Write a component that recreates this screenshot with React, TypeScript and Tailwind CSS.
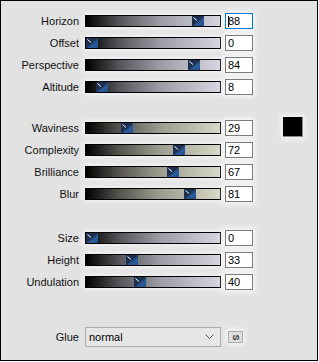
import React from 'react';

type Row = { label: string; value: number };

const gray = 'linear-gradient(to right, #000 0%, #55555a 25%, #9c9ca6 55%, #d6d6e0 100%)';
const beige = 'linear-gradient(to right, #000 0%, #55554f 25%, #9c9c8e 55%, #d8d8c8 100%)';

const Thumb: React.FC<{ value: number }> = ({ value }) => (
  <svg
    width="12"
    height="10"
    viewBox="0 0 12 10"
    className="absolute top-0"
    style={{ left: `${(value / 100) * 121}px` }}
  >
    <defs>
      <linearGradient id="tb" x1="0" y1="0" x2="1" y2="1">
        <stop offset="0" stopColor="#3a72bb" />
        <stop offset="1" stopColor="#24508c" />
      </linearGradient>
    </defs>
    <rect x="0" y="0" width="12" height="10" fill="url(#tb)" />
    <polygon points="0,0 12,0 0,10" fill="#1b2a44" />
    <polygon points="0,0 12,0 12,2 2,10 0,10" fill="#1f3356" opacity="0.6" />
    <line x1="1.5" y1="1.5" x2="5" y2="4.5" stroke="#ffffff" strokeWidth="1" />
  </svg>
);

const SliderRow: React.FC<{ row: Row; bg: string; focused?: boolean; extra?: React.ReactNode }> = ({ row, bg, focused, extra }) => (
  <div className="flex h-[22px] items-center">
    <div className="w-[78px] text-right text-[11px] leading-none text-[#111]">{row.label}</div>
    <div className="ml-[6px] h-[12px] w-[136px] border border-black shadow-[0_0_5px_2px_rgba(255,255,255,0.6)]" style={{ background: bg }}>
      <div className="relative h-[10px]">
        <Thumb value={row.value} />
      </div>
    </div>
    <div
      className={`ml-[4px] flex h-[16px] w-[28px] items-center bg-white pl-[2px] text-[11px] leading-none text-black shadow-[0_0_5px_2px_rgba(255,255,255,0.8)] border ${
        focused ? 'border-[#0078d7]' : 'border-[#7a7a7a]'
      }`}
    >
      {focused && <span className="mr-[-1px] h-[11px] w-px bg-black" />}
      {row.value}
    </div>
    {extra}
  </div>
);

export default function App() {
  const groupA: Row[] = [
    { label: 'Horizon', value: 88 },
    { label: 'Offset', value: 0 },
    { label: 'Perspective', value: 84 },
    { label: 'Altitude', value: 8 },
  ];
  const groupB: Row[] = [
    { label: 'Waviness', value: 29 },
    { label: 'Complexity', value: 72 },
    { label: 'Brilliance', value: 67 },
    { label: 'Blur', value: 81 },
  ];
  const groupC: Row[] = [
    { label: 'Size', value: 0 },
    { label: 'Height', value: 33 },
    { label: 'Undulation', value: 40 },
  ];

  return (
    <div className="h-[361px] w-[318px] border border-black bg-[#e2e2e2] font-['Liberation_Sans',Arial,sans-serif]">
      <div className="flex flex-col pt-[9px]">
        {groupA.map((r, i) => (
          <SliderRow key={r.label} row={r} bg={gray} focused={i === 0} />
        ))}
        <div className="h-[19px]" />
        {groupB.map((r, i) => (
          <SliderRow
            key={r.label}
            row={r}
            bg={beige}
            extra={
              i === 0 ? (
                <div className="ml-[30px] -mt-[2px] h-[20px] w-[20px] border-b border-r border-[#8a8a8a] bg-black shadow-[0_0_6px_2px_rgba(255,255,255,0.7)]" />
              ) : null
            }
          />
        ))}
        <div className="h-[22px]" />
        {groupC.map((r) => (
          <SliderRow key={r.label} row={r} bg={gray} />
        ))}
        <div className="h-[33px]" />
        <div className="flex h-[22px] items-center">
          <div className="w-[78px] text-right text-[11px] leading-none text-[#111]">Glue</div>
          <div className="ml-[6px] flex h-[20px] w-[136px] items-center justify-between border border-[#acacac] bg-[#e6e6e6] pl-[3px] pr-[6px] text-[11px] text-black">
            <span>normal</span>
            <svg width="9" height="6" viewBox="0 0 9 6">
              <polyline points="0.5,0.5 4.5,4.5 8.5,0.5" fill="none" stroke="#555" strokeWidth="1" />
            </svg>
          </div>
          <div className="ml-[7px] flex h-[12px] w-[15px] items-center justify-center border border-[#ababab] bg-[#e0e0e0] shadow-[0_0_5px_2px_rgba(255,255,255,0.7)]">
            <span className="rotate-90 text-[9px] font-bold leading-none text-[#333]">S</span>
          </div>
        </div>
      </div>
    </div>
  );
}
